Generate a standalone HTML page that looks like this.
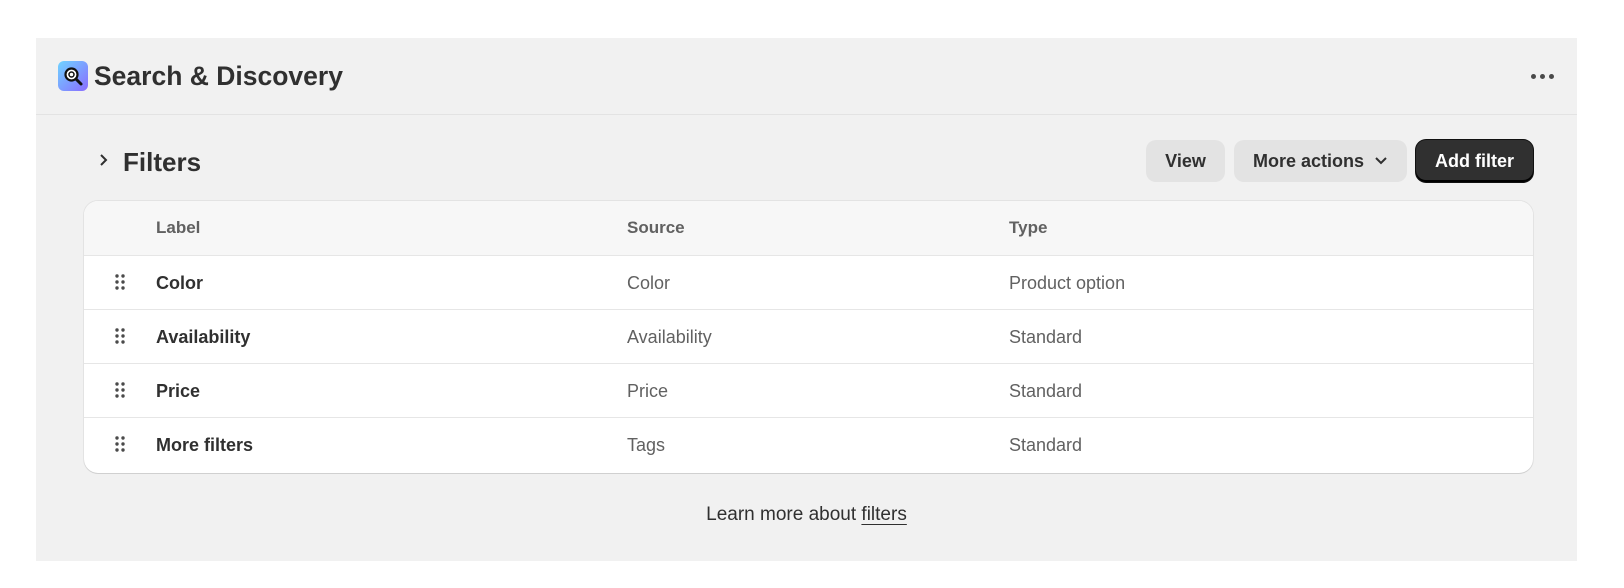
<!DOCTYPE html>
<html><head><style>
*{box-sizing:border-box;margin:0;padding:0}
body{width:1624px;height:588px;background:#fff;font-family:"Liberation Sans",Arial,sans-serif;color:#303030;position:relative;overflow:hidden}
.card{position:absolute;left:36px;top:38px;width:1541px;height:523px;background:#f1f1f1}
.hdr{height:77px;border-bottom:1px solid #e3e3e3;position:relative}
.icon{position:absolute;left:22px;top:23px;width:30px;height:30px;border-radius:6px;background:linear-gradient(135deg,#6fd3ff,#8a6cff)}
.title{position:absolute;left:58px;top:23px;font-size:26.5px;font-weight:700;color:#303030}
.dots{position:absolute;left:1495px;top:36px;display:flex;gap:4px}
.dots i{width:5px;height:5px;border-radius:50%;background:#4a4a4a;display:block}
.ft{position:absolute;top:109px;font-size:26px;font-weight:700}
.btn{position:absolute;top:102px;height:42px;border-radius:10px;background:#e3e3e3;font-size:18px;font-weight:700;color:#303030;display:flex;align-items:center;justify-content:center}
.tbl{position:absolute;left:48px;top:163px;width:1449px;height:272px;background:#fff;border-radius:14px;box-shadow:0 1px 0 #d0d0d0,0 0 0 1px #e3e3e3;overflow:hidden}
.row{height:54px;border-bottom:1px solid #e6e6e6;position:relative;font-size:18px}
.row span{position:absolute;top:17px}
.th{background:#f7f7f7;height:55px}
.th span{color:#616161;font-weight:700;font-size:17px}
.c1{left:72px}.c2{left:543px;color:#616161}.c3{left:925px;color:#616161}
.b{font-weight:700;color:#303030}
.grip{position:absolute;left:31px;top:18px;width:10px;height:16px}
.foot{position:absolute;left:0;width:100%;top:466px;text-align:center;font-size:19px;color:#303030}
.foot u{text-underline-offset:4px}
</style></head><body>
<div class="card">
 <div class="hdr">
  <div class="icon"><svg width="30" height="30" viewBox="0 0 30 30"><circle cx="13.5" cy="13.5" r="6" fill="#fff" stroke="#111" stroke-width="2.2"/><circle cx="13.5" cy="13.5" r="2.5" fill="none" stroke="#111" stroke-width="1.5"/><path d="M18 18l5 5" stroke="#111" stroke-width="3" stroke-linecap="round"/></svg></div>
  <div class="title">Search &amp; Discovery</div>
  <div class="dots"><i></i><i></i><i></i></div>
 </div>
 <svg style="position:absolute;left:62px;top:115px" width="12" height="14" viewBox="0 0 12 14"><path d="M3 2l5 5-5 5" fill="none" stroke="#303030" stroke-width="2"/></svg>
 <div class="ft" style="left:87px">Filters</div>
 <div class="btn" style="left:1110px;width:79px">View</div>
 <div class="btn" style="left:1198px;width:173px">More actions <svg style="margin-left:10px" width="14" height="10" viewBox="0 0 14 10"><path d="M2 2l5 5 5-5" fill="none" stroke="#303030" stroke-width="2"/></svg></div>
 <div class="btn" style="left:1380px;width:117px;background:#303030;color:#fff;box-shadow:inset 0 -2px 0 #000,0 0 0 1px #111">Add filter</div>
 <div class="tbl">
  <div class="row th"><span class="c1">Label</span><span class="c2" style="color:#616161">Source</span><span class="c3">Type</span></div>
  <div class="row"><svg class="grip" viewBox="0 0 10 16"><g fill="#4a4a4a"><circle cx="2" cy="2" r="1.7"/><circle cx="8" cy="2" r="1.7"/><circle cx="2" cy="8" r="1.7"/><circle cx="8" cy="8" r="1.7"/><circle cx="2" cy="14" r="1.7"/><circle cx="8" cy="14" r="1.7"/></g></svg><span class="c1 b">Color</span><span class="c2">Color</span><span class="c3">Product option</span></div>
  <div class="row"><svg class="grip" viewBox="0 0 10 16"><g fill="#4a4a4a"><circle cx="2" cy="2" r="1.7"/><circle cx="8" cy="2" r="1.7"/><circle cx="2" cy="8" r="1.7"/><circle cx="8" cy="8" r="1.7"/><circle cx="2" cy="14" r="1.7"/><circle cx="8" cy="14" r="1.7"/></g></svg><span class="c1 b">Availability</span><span class="c2">Availability</span><span class="c3">Standard</span></div>
  <div class="row"><svg class="grip" viewBox="0 0 10 16"><g fill="#4a4a4a"><circle cx="2" cy="2" r="1.7"/><circle cx="8" cy="2" r="1.7"/><circle cx="2" cy="8" r="1.7"/><circle cx="8" cy="8" r="1.7"/><circle cx="2" cy="14" r="1.7"/><circle cx="8" cy="14" r="1.7"/></g></svg><span class="c1 b">Price</span><span class="c2">Price</span><span class="c3">Standard</span></div>
  <div class="row" style="border:none"><svg class="grip" viewBox="0 0 10 16"><g fill="#4a4a4a"><circle cx="2" cy="2" r="1.7"/><circle cx="8" cy="2" r="1.7"/><circle cx="2" cy="8" r="1.7"/><circle cx="8" cy="8" r="1.7"/><circle cx="2" cy="14" r="1.7"/><circle cx="8" cy="14" r="1.7"/></g></svg><span class="c1 b">More filters</span><span class="c2">Tags</span><span class="c3">Standard</span></div>
 </div>
 <div class="foot">Learn more about <u>filters</u></div>
</div>
</body></html>
